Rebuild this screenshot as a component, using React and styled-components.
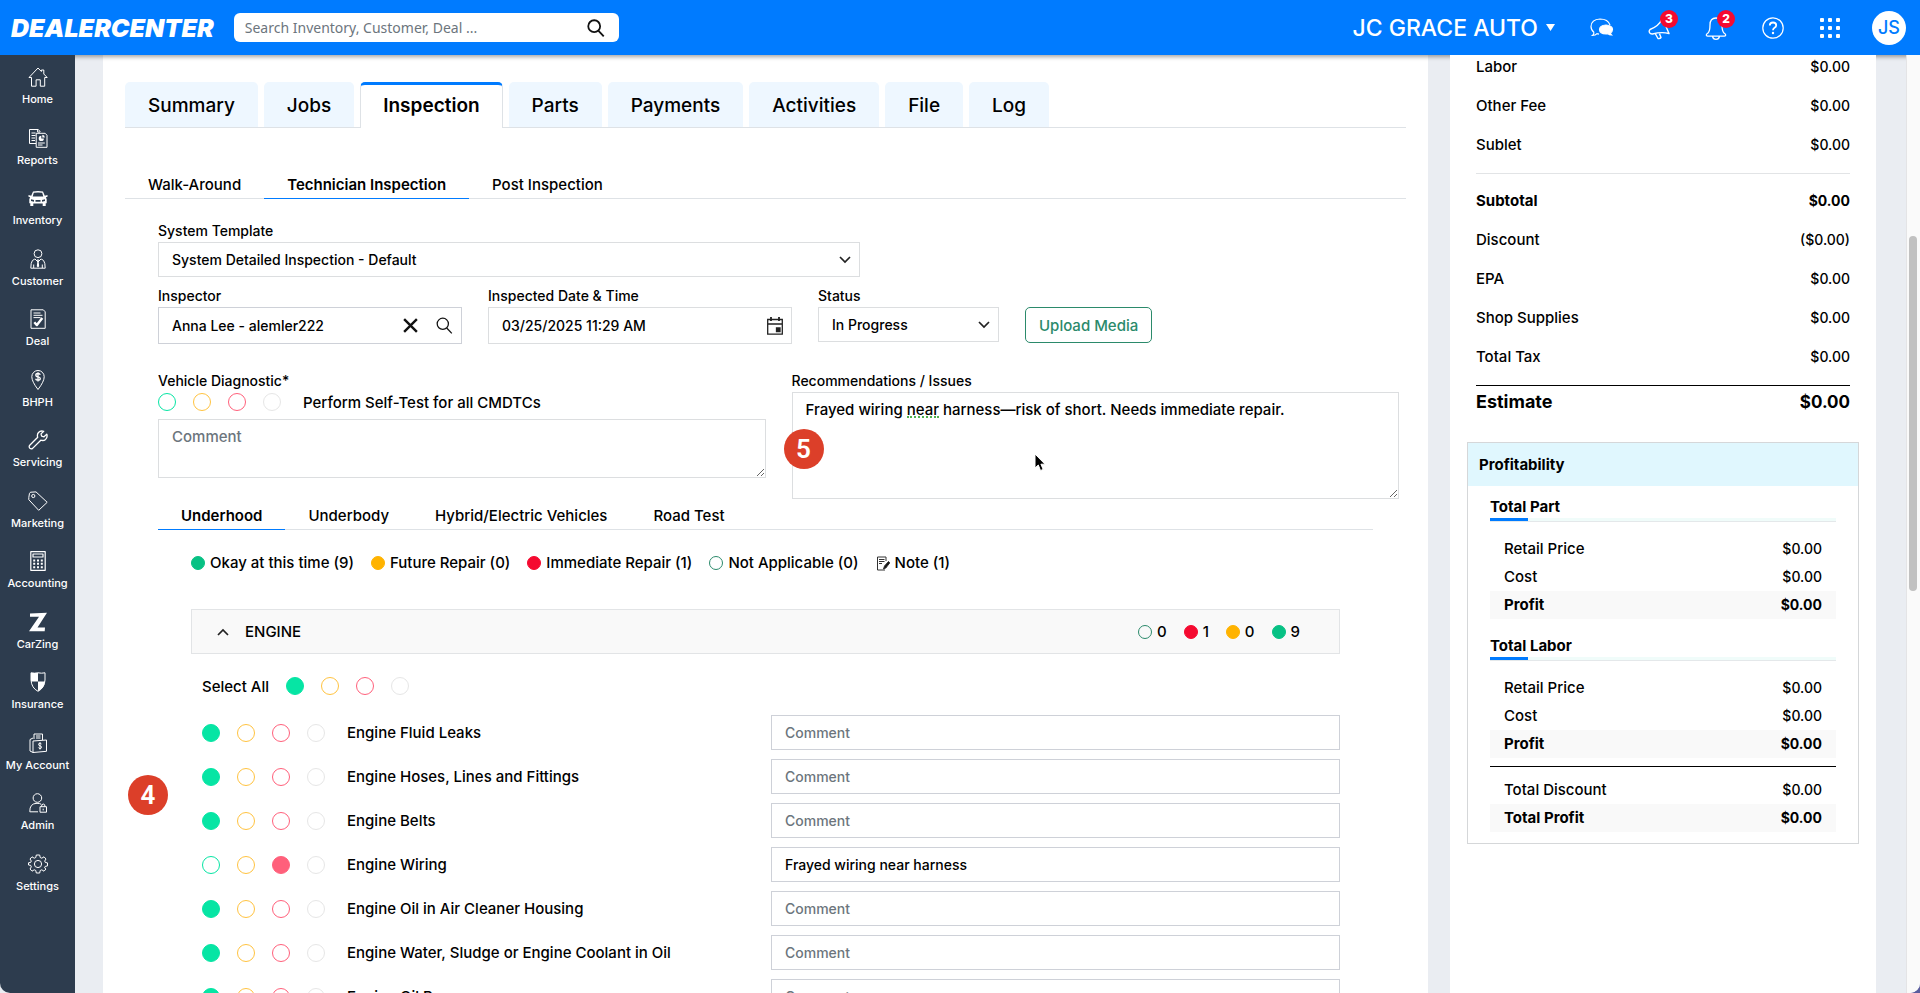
import React, { useState } from 'react';
import styled, { createGlobalStyle, css } from 'styled-components';

const GlobalStyle = createGlobalStyle`
  * {
    box-sizing: border-box;
  }
  body {
    margin: 0;
    background: #5a5c9e;
    color: #000;
    font-family: Inter, "Liberation Sans", sans-serif;
    font-size: 15px;
    font-weight: 500;
  }
  button, input, select, textarea {
    font: inherit;
    color: inherit;
  }
  ul, dl, dd {
    margin: 0;
    padding: 0;
    list-style: none;
  }
`;

const Shell = styled.div`
  display: flex;
  flex-direction: column;
  height: 100vh;
  overflow: hidden;
  background: #eaedf2;
  border-bottom-right-radius: 10px;
`;

/* ---------- header ---------- */

const Header = styled.header`
  display: flex;
  align-items: center;
  flex: none;
  height: 55px;
  padding: 0 14px 0 11px;
  background: #007bff;
  color: #fff;
  box-shadow: 0 2px 4px rgba(0, 0, 0, 0.35);
  z-index: 1;
`;

const Logo = styled.a`
  font-size: 25px;
  font-weight: 900;
  font-style: italic;
  color: #fff;
  text-decoration: none;
`;

const SearchBox = styled.form`
  display: flex;
  align-items: center;
  width: 385px;
  height: 29px;
  margin-left: 20px;
  padding: 0 14px 0 11px;
  border-radius: 6px;
  background: #fff;
`;

const SearchInput = styled.input`
  flex: 1;
  min-width: 0;
  padding: 0;
  border: 0;
  outline: 0;
  background: none;
  font-family: "Noto Sans", sans-serif;
  font-size: 14px;
  font-weight: 400;
  color: #000;
  &::placeholder {
    color: #6c757d;
    opacity: 1;
  }
`;

const PlainButton = styled.button`
  display: flex;
  align-items: center;
  justify-content: center;
  padding: 0;
  border: 0;
  background: none;
  color: #111;
  cursor: pointer;
`;

const DealerButton = styled(PlainButton)`
  gap: 8px;
  margin-left: auto;
  margin-right: 18px;
  font-size: 23px;
  color: #fff;
`;

const HeaderButton = styled(PlainButton)`
  position: relative;
  width: 57px;
  height: 55px;
  color: #fff;
`;

const Badge = styled.span`
  position: absolute;
  top: 10px;
  left: 30px;
  width: 18px;
  height: 18px;
  border-radius: 50%;
  background: #f50a30;
  font-size: 12px;
  font-weight: 800;
  line-height: 18px;
  text-align: center;
`;

const Avatar = styled(PlainButton)`
  width: 34px;
  height: 34px;
  margin-left: 14px;
  border-radius: 50%;
  background: #fff;
  font-size: 18px;
  color: #007bff;
`;

/* ---------- sidebar ---------- */

const Body = styled.div`
  display: flex;
  flex: 1;
  min-height: 0;
`;

const Sidebar = styled.nav`
  display: flex;
  flex: none;
  width: 75px;
  padding-bottom: 91px;
  background: #2d3c4e;
  border-bottom-left-radius: 10px;
  z-index: 2;
`;

const SideList = styled.ul`
  display: grid;
  grid-auto-rows: 1fr;
  flex: 1;
`;

const SideLink = styled.a`
  display: flex;
  flex-direction: column;
  align-items: center;
  gap: 5px;
  padding-top: 12px;
  font-size: 11px;
  line-height: 14px;
  white-space: nowrap;
  color: #fff;
  text-decoration: none;
`;

/* ---------- main area ---------- */

const Content = styled.div`
  display: flex;
  flex: 1;
  gap: 22px;
  min-width: 0;
  padding: 0 30px 0 28px;
`;

const Card = styled.main`
  flex: 1;
  min-width: 0;
  padding: 27px 22px 0;
  background: #fff;
`;

const MainTabs = styled.div`
  display: flex;
  gap: 6px;
  border-bottom: 1px solid #dee2e6;
`;

const MainTab = styled.button`
  height: 45px;
  padding: 0 22px;
  border: 1px solid transparent;
  border-bottom: 0;
  border-radius: 5px 5px 0 0;
  background: #eef7ff;
  font-size: 19px;
  cursor: pointer;
  ${({ $active }) => $active && css`
    height: 46px;
    margin-bottom: -1px;
    padding-bottom: 2px;
    border-color: #dee2e6;
    border-top: 3px solid #007bff;
    background: #fff;
    font-weight: 600;
  `}
`;

const SubTabs = styled.div`
  display: flex;
  margin-top: ${({ $top }) => $top || 0}px;
  margin-right: ${({ $right }) => $right || 0}px;
  border-bottom: 1px solid #dee2e6;
`;

const SubTab = styled.button`
  height: 31px;
  margin-bottom: -1px;
  padding: 2px 23px 0;
  border: 0;
  border-bottom: 1px solid ${({ $active }) => ($active ? '#007bff' : 'transparent')};
  background: none;
  font-weight: ${({ $active }) => ($active ? 600 : 500)};
  cursor: pointer;
`;

const Form = styled.div`
  padding: 22px 7px 0 33px;
`;

const Label = styled.label`
  display: block;
  margin-bottom: 1px;
  font-size: 14px;
  line-height: 20px;
`;

const TemplateField = styled.div`
  width: 57%;
  max-width: 702px;
`;

const FieldGrid = styled.div`
  display: grid;
  grid-template-columns: 304fr 304fr 181fr 374fr;
  column-gap: 26px;
  align-items: start;
  margin-top: 9px;
`;

/* the control and its trailing icons share one cell */
const Stack = styled.div`
  display: grid;
  align-items: center;
  > * {
    grid-area: 1 / 1;
  }
`;

const inputLook = css`
  width: 100%;
  padding: 0 13px;
  border: 1px solid #dcdee0;
  border-radius: 0;
  outline: 0;
  background: #fff;
  font-size: 14px;
  &::placeholder {
    color: #6c757d;
    opacity: 1;
  }
`;

const Select = styled.select`
  ${inputLook}
  height: 35px;
  padding-bottom: 1px;
  appearance: none;
`;

const Input = styled.input`
  ${inputLook}
  height: ${({ $height }) => $height || 37}px;
  border-color: ${({ $dark }) => ($dark ? '#ced1d8' : '#dcdee0')};
`;

const Textarea = styled.textarea`
  ${inputLook}
  display: block;
  height: ${({ $height }) => $height}px;
  padding: 7px 13px;
  font-size: 15px;
  line-height: 20px;
`;

const Trailing = styled.div`
  display: flex;
  align-items: center;
  gap: 18px;
  justify-self: end;
  margin-right: 9px;
  pointer-events: ${({ $passive }) => ($passive ? 'none' : 'auto')};
`;

const UploadButton = styled.button`
  justify-self: start;
  height: 36px;
  margin-top: 21px;
  padding: 0 13px;
  border: 1px solid #2b8a6b;
  border-radius: 5px;
  background: #fff;
  color: #2b8a6b;
  white-space: nowrap;
  cursor: pointer;
`;

const Columns = styled.div`
  display: grid;
  grid-template-columns: 1fr 1fr;
  column-gap: 26px;
  margin-top: 27px;
`;

const DiagnosticRow = styled.div`
  display: flex;
  align-items: center;
  gap: 22px;
  height: 20px;
  margin-bottom: 7px;
`;

const NoteArea = styled.div`
  position: relative;
`;

const SpellMark = styled.span`
  position: absolute;
  top: 24px;
  left: 115px;
  width: 32px;
  border-bottom: 2px dotted #4fb04f;
`;

const StepBadge = styled.span`
  position: absolute;
  top: ${({ $top }) => $top}px;
  left: ${({ $left }) => $left}px;
  width: 40px;
  height: 40px;
  border-radius: 50%;
  background: #dc3f29;
  color: #fff;
  font-family: Roboto, sans-serif;
  font-size: 26px;
  font-weight: 600;
  line-height: 40px;
  text-align: center;
`;

const Pointer = styled.svg`
  position: absolute;
  top: 60px;
  left: 241px;
`;

/* ---------- inspection list ---------- */

const Panel = styled.section`
  position: relative;
  padding: 23px 33px 0;
  margin-right: 26px;
`;

const Legend = styled.div`
  display: flex;
  gap: 17px;
  line-height: 20px;
  white-space: nowrap;
`;

const LegendItem = styled.span`
  display: flex;
  align-items: center;
  gap: 5px;
`;

const Dot = styled.i`
  width: 14px;
  height: 14px;
  border: 1px solid ${({ $color }) => $color || '#2b8a6b'};
  border-radius: 50%;
  background: ${({ $color }) => $color || 'none'};
`;

const GroupBar = styled.div`
  display: flex;
  align-items: center;
  height: 45px;
  margin-top: 36px;
  padding: 0 39px 0 25px;
  border: 1px solid #e2e4e6;
  background: #f9f9f9;
`;

const GroupToggle = styled(PlainButton)`
  gap: 16px;
  color: #000;
`;

const Counts = styled(Legend)`
  margin-left: auto;
`;

const SelectAll = styled.div`
  display: flex;
  align-items: center;
  gap: 17px;
  height: 20px;
  margin-top: 22px;
  padding-left: 11px;
`;

const Rows = styled.ul`
  display: grid;
  gap: 9px;
  margin-top: 19px;
  padding-left: 11px;
`;

const Row = styled.li`
  display: grid;
  grid-template-columns: 1fr 1fr;
  align-items: center;
`;

const RowName = styled.div`
  display: flex;
  align-items: center;
  gap: 22px;
`;

const Ratings = styled.div`
  display: flex;
  gap: 17px;
`;

const Rating = styled.input`
  appearance: none;
  width: 18px;
  height: 18px;
  margin: 0;
  border: 1px solid ${({ $color }) => $color};
  border-radius: 50%;
  cursor: pointer;
  &:checked {
    background: ${({ $color }) => $color};
  }
`;

/* ---------- totals ---------- */

const Side = styled.aside`
  flex: none;
  width: 426px;
  padding: 1px 17px 0;
  background: #fff;
  z-index: 2;
`;

const Totals = styled.dl`
  display: grid;
  gap: 17px;
  margin: 0 9px;
  padding: ${({ $top }) => $top || 0}px 0 17px;
  border-bottom: 1px solid ${({ $rule }) => $rule};
`;

const Line = styled.div`
  display: flex;
  justify-content: space-between;
  line-height: 22px;
  font-weight: ${({ $bold }) => ($bold ? 700 : 500)};
  dd {
    font-size: ${({ $large }) => ($large ? 17 : 14)}px;
  }
`;

const Estimate = styled.dl`
  margin: 4px 9px 28px;
  font-size: 18px;
  ${Line} {
    line-height: 24px;
  }
`;

const ProfitBox = styled.section`
  border: 1px solid #d5d7d9;
  padding-bottom: 11px;
`;

const ProfitHead = styled.h2`
  margin: 0;
  padding-left: 11px;
  background: #e0f7fe;
  font-size: 15px;
  font-weight: 700;
  line-height: 43px;
`;

const ProfitTitle = styled.h3`
  margin: ${({ $top }) => $top}px 22px 13px;
  border-bottom: 1px solid #e4e8ea;
  font-size: 15px;
  font-weight: 700;
  line-height: 22px;
  &::after {
    content: "";
    display: block;
    height: 3px;
    background: linear-gradient(to right, #007bff 38px, #f0fcfa 38px);
  }
`;

const ProfitList = styled.dl`
  margin: 0 22px;
  ${({ $ruled }) => $ruled && css`
    margin-top: 8px;
    padding-top: 9px;
    border-top: 1px solid #000;
  `}
  ${Line} {
    padding: 0 14px;
    line-height: 28px;
    &:last-child {
      background: #f9f9f9;
    }
  }
`;

const ScrollTrack = styled.div`
  flex: none;
  width: 14px;
  padding: 181px 3px 0 2px;
  border-left: 1px solid #e4e4e6;
  background: #fafafa;
  z-index: 2;
`;

const ScrollThumb = styled.div`
  height: 355px;
  border-radius: 4px;
  background: #c1c1c1;
`;

/* ---------- icons ---------- */

const Icon = ({ size = 20, w = 1, children, ...rest }) => (
  <svg width={size} height={size} viewBox="0 0 20 20" fill="none" stroke="currentColor"
    strokeWidth={w} strokeLinejoin="round" aria-hidden="true" {...rest}>{children}</svg>
);

const Chevron = ({ up }) => (
  <svg width="12" height="8" viewBox="0 0 12 8" fill="none" stroke="#222" strokeWidth="1.700" aria-hidden="true">
    <path d={up ? 'M1 7l5-5 5 5' : 'M1 1l5 5 5-5'} />
  </svg>
);

const SearchIcon = ({ size = 18, w = 2 }) => (
  <Icon size={size} w={w}><circle cx="8" cy="8" r="6.6" /><path d="M12.6 13l6 6.2" /></Icon>
);

const icons = {
  Home: <><path d="M1 10.5L10 1l3.4 3.5V3h2.4v4l3.4 3.5h-2.5v8.7h-4.4v-6.4H8.1v6.4H3.5v-8.7z" /></>,
  Reports: <>
    <path d="M8 15.5H1.5V1.5h8.8l2 2.3M9.6 1.7v2.4h2.500M3.5 5h4M3.5 7.5h4M3.5 10h3.5M3.5 12.5h3.5" />
    <path d="M8.2 5.3h9l1.8 2v12H8.2zM10 15h6.8M10 17h4.5" />
    <path d="M13.300 7.800a2.600 2.600 0 1 0 2.600 2.600h-2.600z" fill="currentColor" stroke="none" />
    <path d="M14.300 6.800a3 3 0 0 1 2.600 2.600h-2.600z" fill="currentColor" stroke="none" />
  </>,
  Inventory: <>
    <path fillRule="evenodd" fill="currentColor" stroke="none" d="M5 3.5q5-1 10 0l1.8 4.2L19.5 7v1.8l-1.600.4.8 2v4h-1V18h-3v-2.600H5.300V18h-3v-2.700h-1v-4l.8-2L.5 8.800V7l2.700.7zM5.800 4.800L4.700 8.500h10.600L14.200 4.800q-4.200-.7-8.400 0zM3 11.300v1.700l3 .8V12zM17 11.300l-3 .700v1.800l3-.8zM7.500 12v1.700h5V12z" />
  </>,
  Customer: <>
    <circle cx="10" cy="4.700" r="3.900" />
    <path d="M6.800 10q-3 .8-3.600 4.500l-.4 4.700h14.400l-.4-4.700q-.6-3.700-3.600-4.500M5.700 19v-3.500M14.300 19v-3.500M7 10l3 3 3-3" />
    <path d="M9 10.500h2l-.4 1.800.6 5-1.200 1.200-1.200-1.200.6-5z" fill="currentColor" stroke="none" />
  </>,
  Deal: <>
    <path d="M3 .8h12.300l1.900 2v16.500H3zM5.500 4h7M5.500 6.300h9M5.500 8.600h7" />
    <path d="M6.300 13.300l2.600 2.800L14.300 9" strokeWidth="2.400" />
  </>,
  BHPH: <>
    <path d="M10 19.500Q3.800 11.500 3.800 6.700a6.200 6.200 0 0 1 12.400 0Q16.200 11.500 10 19.500z" />
    <path d="M12.300 4.700q-.5-1.200-2.300-1.200-2.200 0-2.200 1.600T10 6.800t2.300 1.700q0 1.700-2.300 1.700-2 0-2.400-1.400M10 2.200v9.300" strokeWidth="1.300" />
  </>,
  Servicing: <path strokeWidth="1.300" d="M15.700 1.300q-3.200-1-5.200 1.200-1.700 2-.8 4.700L1.500 15.500q-.8 1.800.4 2.800 1.300 1 2.700.1l8.200-8.200q2.800.9 4.800-.8 2.200-2.100 1.200-5.300l-2.800 2.700-2.400-.6-.6-2.300z" />,
  Marketing: <><path d="M.8 6.500L1.500 2.300Q1.800 1.500 2.800 1.200L8 .9l11.200 10.400-8.500 8L.8 8.700z" /><circle cx="5.300" cy="5" r="1.600" /></>,
  Accounting: <>
    <path d="M2.800.7h14.400v18.600H2.800zM5 3h10v3H5z" strokeWidth="1.200" />
    <path d="M5.200 9.500h9.600M5.200 12.800h9.600M5.200 16.200h9.600" strokeWidth="2" strokeDasharray="2 1.800" />
  </>,
  CarZing: <path fill="currentColor" stroke="none" d="M2 1.500L19 .8 9.500 15.500H17l-.3 3.800H1L11 4.800H2z" />,
  Insurance: <><path d="M10 .8q3.500.8 7 0V8q-.5 8-7 11.300Q3.500 16 3 8V.8q3.500.8 7 0z" /><path fill="currentColor" stroke="none" d="M3 1h7v8.500H3zM10 9.500h7q-.8 6.500-7 9.800z" /></>,
  'My Account': <>
    <path d="M2 18V6.500L5 5M6 6V1h8.500v6M8 3h4.500M8 5h4.500M2 18l3 1.500M5 8l13.500-1v11.300L5 19.500z" />
    <path d="M13.500 11q-.5-.8-1.500-.8-1.500 0-1.500 1.200T12 12.800t1.500 1.400q0 1.300-1.500 1.300-1.200 0-1.600-1M12 9.300v7.200" />
  </>,
  Admin: <>
    <circle cx="9.400" cy="5" r="4.300" />
    <path d="M10 18.800H1.800Q1.500 10.300 9 10.300q2.800 0 4.300 1M12 13.700h6.500v5.500H12zM13.500 13.700q0-2.700 1.800-2.700t1.700 2.700M15.200 15.700v1.700" />
  </>,
  Settings: <>
    <circle cx="10" cy="10" r="3.600" />
    <path d="M8.300 1h3.400l.5 2.500 1.600.7L16 2.800 18 5l-1.300 2 .6 1.500 2.200.4v3l-2.300.5-.6 1.500L18 15l-2 2.200-2.200-1.400-1.600.7-.5 2.500H8.300l-.5-2.500-1.600-.7L4 17.200 2 15l1.300-2.100-.6-1.500L.5 11V8.800l2.200-.4L3.300 7 2 5l2-2.200 2.200 1.400 1.600-.7z" />
  </>,
};

const ratingColors = [
  ['Okay', '#06e5a4'],
  ['Future repair', '#ffc340'],
  ['Immediate repair', '#ff607b'],
  ['Not applicable', '#e6e6e6'],
];

const GREEN = '#07c184';
const AMBER = '#ffb300';
const RED = '#f50a30';

const checks = [
  { name: 'Engine Fluid Leaks', rating: 0 },
  { name: 'Engine Hoses, Lines and Fittings', rating: 0 },
  { name: 'Engine Belts', rating: 0 },
  { name: 'Engine Wiring', rating: 2, comment: 'Frayed wiring near harness' },
  { name: 'Engine Oil in Air Cleaner Housing', rating: 0 },
  { name: 'Engine Water, Sludge or Engine Coolant in Oil', rating: 0 },
  { name: 'Engine Oil Pan', rating: 0 },
];

const RatingGroup = ({ name, initial }) => {
  const [value, setValue] = useState(initial);
  return (
    <Ratings role="radiogroup" aria-label={name}>
      {ratingColors.map(([label, color], index) => (
        <Rating key={label} type="radio" name={name} aria-label={label} $color={color}
          checked={value === index} onChange={() => setValue(index)} />
      ))}
    </Ratings>
  );
};

const Tabs = ({ items, active, ...rest }) => (
  <SubTabs role="tablist" {...rest}>
    {items.map((item) => (
      <SubTab key={item} role="tab" aria-selected={item === active} $active={item === active}>{item}</SubTab>
    ))}
  </SubTabs>
);

const Amount = ({ label, value = '$0.00', bold, large }) => (
  <Line $bold={bold} $large={large}><dt>{label}</dt><dd>{value}</dd></Line>
);

const TopBar = () => (
  <Header>
    <Logo href="#">DEALERCENTER</Logo>
    <SearchBox role="search">
      <SearchInput aria-label="Search" placeholder="Search Inventory, Customer, Deal ..." />
      <PlainButton type="button" aria-label="Search"><SearchIcon /></PlainButton>
    </SearchBox>
    <DealerButton>
      JC GRACE AUTO
      <svg width="9" height="7" viewBox="0 0 9 7" fill="#fff" aria-hidden="true"><path d="M0 0h9L4.500 7z" /></svg>
    </DealerButton>
    <HeaderButton aria-label="Chat">
      <svg width="24" height="20" viewBox="0 0 24 20" fill="none" stroke="#fff" strokeWidth="1.200" aria-hidden="true">
        <path d="M4 14.500Q1 12 1 8.500 1.300 1.500 10 1q8 0 10 6M4 14.500q-.2 2-1.500 3 3 0 4.500-1.800l2 .5" />
        <path fill="#fff" d="M22.500 11.300q-.3-4-6.500-4.300-6.300.3-6.500 4.500.2 4.300 6.500 4.500 1.200 0 2-.2 1.500 1.300 3.500 1.200-1-.8-1-2 2-1.500 2-3.700z" />
      </svg>
    </HeaderButton>
    <HeaderButton aria-label="Announcements">
      <svg width="24" height="24" viewBox="0 0 24 24" fill="none" stroke="#fff" strokeWidth="1.400" strokeLinejoin="round" aria-hidden="true">
        <path d="M15 3q-3 7-12 10.500-1.500 1.500-.5 3.200 1 1.500 3 1.300 9-2.500 16.500-.5L17 6M8.500 18l2.500 4.500q2 .5 3-1l-1.500-3.800" />
      </svg>
      <Badge>3</Badge>
    </HeaderButton>
    <HeaderButton aria-label="Notifications">
      <svg width="22" height="24" viewBox="0 0 22 24" fill="none" stroke="#fff" strokeWidth="1.300" aria-hidden="true">
        <path d="M11 2Q5 2 5 9q0 6-2 8-1.700 1-1.700 2 0 1.200 3 1.200h13.400q3 0 3-1.200 0-1-1.700-2-2-2-2-8 0-7-6-7zM7.500 20.300q.5 3 3.500 3t3.500-3" />
      </svg>
      <Badge>2</Badge>
    </HeaderButton>
    <HeaderButton aria-label="Help">
      <svg width="22" height="22" viewBox="0 0 22 22" fill="none" stroke="#fff" aria-hidden="true">
        <circle cx="11" cy="11" r="10.200" strokeWidth="1.200" />
        <path d="M7.800 8.500q0-3 3.200-3t3.200 2.700q0 1.600-1.700 2.600-1.500.9-1.500 2.400" strokeWidth="1.800" />
        <circle cx="11" cy="16" r="1.200" fill="#fff" stroke="none" />
      </svg>
    </HeaderButton>
    <HeaderButton aria-label="Apps">
      <svg width="22" height="22" viewBox="0 0 22 22" fill="#fff" aria-hidden="true">
        {[1, 9, 17].map((y) => [1, 9, 17].map((x) => <rect key={`${x}-${y}`} x={x} y={y} width="4" height="4" rx="1" />))}
      </svg>
    </HeaderButton>
    <Avatar>JS</Avatar>
  </Header>
);

const InspectionForm = () => (
  <Form>
    <TemplateField>
      <Label htmlFor="template">System Template</Label>
      <Stack>
        <Select id="template"><option>System Detailed Inspection - Default</option></Select>
        <Trailing $passive><Chevron /></Trailing>
      </Stack>
    </TemplateField>

    <FieldGrid>
      <div>
        <Label htmlFor="inspector">Inspector</Label>
        <Stack>
          <Input id="inspector" $dark defaultValue="Anna Lee - alemler222" />
          <Trailing>
            <PlainButton aria-label="Clear inspector"><Icon size={15} w={3.2}><path d="M1.500 1.500l17 17M18.500 1.500l-17 17" /></Icon></PlainButton>
            <PlainButton aria-label="Find inspector"><SearchIcon size={17} w={1.5} /></PlainButton>
          </Trailing>
        </Stack>
      </div>
      <div>
        <Label htmlFor="inspected">Inspected Date &amp; Time</Label>
        <Stack>
          <Input id="inspected" defaultValue="03/25/2025 11:29 AM" />
          <Trailing>
            <PlainButton aria-label="Open calendar">
              <svg width="16" height="18" viewBox="0 0 16 18" fill="none" stroke="#222" strokeWidth="1.300" aria-hidden="true">
                <path d="M.7 2.500h14.600v14.700H.7zM.7 7h14.600" />
                <path d="M4 0v4M12 0v4" strokeWidth="1.800" />
                <path d="M9.500 11h3.500v3.500H9.500z" fill="#222" />
              </svg>
            </PlainButton>
          </Trailing>
        </Stack>
      </div>
      <div>
        <Label htmlFor="status">Status</Label>
        <Stack>
          <Select id="status"><option>In Progress</option></Select>
          <Trailing $passive><Chevron /></Trailing>
        </Stack>
      </div>
      <UploadButton>Upload Media</UploadButton>
    </FieldGrid>

    <Columns>
      <div>
        <Label htmlFor="diagnostic">Vehicle Diagnostic*</Label>
        <DiagnosticRow>
          <RatingGroup name="Vehicle Diagnostic" initial={-1} />
          <span>Perform Self-Test for all CMDTCs</span>
        </DiagnosticRow>
        <Textarea id="diagnostic" $height={59} placeholder="Comment" />
      </div>
      <div>
        <Label htmlFor="issues">Recommendations / Issues</Label>
        <NoteArea>
          <Textarea id="issues" $height={107} defaultValue="Frayed wiring near harness—risk of short. Needs immediate repair." spellCheck={false} />
          <SpellMark />
          <StepBadge $top={37} $left={-8}>5</StepBadge>
          <Pointer width="14" height="22" viewBox="0 0 14 22" aria-hidden="true">
            <path d="M2 2v14l3.300-3 2.200 5.500 2.700-1.100-2.300-5.200H12z" fill="#000" stroke="#fff" />
          </Pointer>
        </NoteArea>
      </div>
    </Columns>

    <Tabs $right={26} active="Underhood" items={['Underhood', 'Underbody', 'Hybrid/Electric Vehicles', 'Road Test']} />

    <Panel>
      <Legend>
        <LegendItem><Dot $color={GREEN} />Okay at this time (9)</LegendItem>
        <LegendItem><Dot $color={AMBER} />Future Repair (0)</LegendItem>
        <LegendItem><Dot $color={RED} />Immediate Repair (1)</LegendItem>
        <LegendItem><Dot />Not Applicable (0)</LegendItem>
        <LegendItem>
          <svg width="14" height="15" viewBox="0 0 14 15" fill="none" stroke="#333" aria-hidden="true">
            <path d="M9 14H1.500V1H10v4M3 3.500h5.500M3 5.500h5.500M3 7.500h3" />
            <path d="M7.500 13l1-3 4-4.500 1.300 1.300L9.800 12z" fill="#111" />
          </svg>
          Note (1)
        </LegendItem>
      </Legend>

      <GroupBar>
        <GroupToggle aria-expanded="true"><Chevron up />ENGINE</GroupToggle>
        <Counts>
          <LegendItem><Dot />0</LegendItem>
          <LegendItem><Dot $color={RED} />1</LegendItem>
          <LegendItem><Dot $color={AMBER} />0</LegendItem>
          <LegendItem><Dot $color={GREEN} />9</LegendItem>
        </Counts>
      </GroupBar>

      <SelectAll>
        <span>Select All</span>
        <RatingGroup name="Select All" initial={0} />
      </SelectAll>

      <Rows>
        {checks.map(({ name, rating, comment }) => (
          <Row key={name}>
            <RowName>
              <RatingGroup name={name} initial={rating} />
              <span>{name}</span>
            </RowName>
            <Input $dark $height={35} aria-label={`${name} comment`} placeholder="Comment" defaultValue={comment} />
          </Row>
        ))}
      </Rows>
      <StepBadge $top={245} $left={-30}>4</StepBadge>
    </Panel>
  </Form>
);

const CostSummary = () => (
  <Side>
    <Totals $rule="#e2e4e6">
      <Amount label="Labor" />
      <Amount label="Other Fee" />
      <Amount label="Sublet" />
    </Totals>
    <Totals $top={16} $rule="#000">
      <Amount label="Subtotal" bold />
      <Amount label="Discount" value="($0.00)" />
      <Amount label="EPA" />
      <Amount label="Shop Supplies" />
      <Amount label="Total Tax" />
    </Totals>
    <Estimate><Amount label="Estimate" bold large /></Estimate>

    <ProfitBox>
      <ProfitHead>Profitability</ProfitHead>
      <ProfitTitle $top={10}>Total Part</ProfitTitle>
      <ProfitList>
        <Amount label="Retail Price" />
        <Amount label="Cost" />
        <Amount label="Profit" bold />
      </ProfitList>
      <ProfitTitle $top={16}>Total Labor</ProfitTitle>
      <ProfitList>
        <Amount label="Retail Price" />
        <Amount label="Cost" />
        <Amount label="Profit" bold />
      </ProfitList>
      <ProfitList $ruled>
        <Amount label="Total Discount" />
        <Amount label="Total Profit" bold />
      </ProfitList>
    </ProfitBox>
  </Side>
);

const mainTabs = ['Summary', 'Jobs', 'Inspection', 'Parts', 'Payments', 'Activities', 'File', 'Log'];

const App = () => (
  <>
    <GlobalStyle />
    <Shell>
      <TopBar />
      <Body>
        <Sidebar>
          <SideList>
            {Object.keys(icons).map((name) => (
              <li key={name}>
                <SideLink href="#"><Icon>{icons[name]}</Icon>{name}</SideLink>
              </li>
            ))}
          </SideList>
        </Sidebar>
        <Content>
          <Card>
            <MainTabs role="tablist">
              {mainTabs.map((tab) => (
                <MainTab key={tab} role="tab" aria-selected={tab === 'Inspection'} $active={tab === 'Inspection'}>{tab}</MainTab>
              ))}
            </MainTabs>
            <Tabs $top={40} active="Technician Inspection" items={['Walk-Around', 'Technician Inspection', 'Post Inspection']} />
            <InspectionForm />
          </Card>
          <CostSummary />
        </Content>
        <ScrollTrack><ScrollThumb /></ScrollTrack>
      </Body>
    </Shell>
  </>
);

export default App;
